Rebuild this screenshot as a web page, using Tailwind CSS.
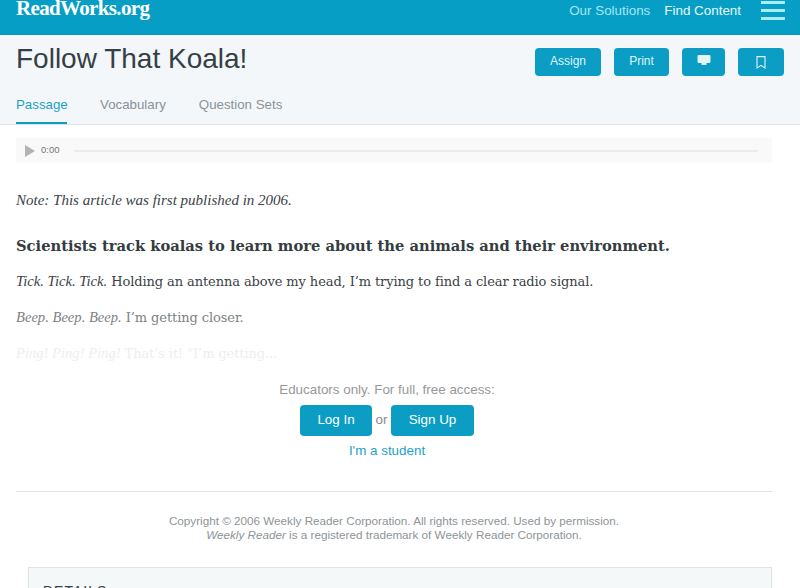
<!DOCTYPE html>
<html>
<head>
<script src="https://cdn.jsdelivr.net/npm/@tailwindcss/browser@4"></script>
</head>
<body class="bg-white overflow-hidden font-['Liberation_Sans',sans-serif]">
<div class="w-[800px] h-[588px] overflow-hidden flex flex-col">
  <header class="h-[35px] shrink-0 bg-[#079ec6] flex items-start justify-between pl-4 pr-4 overflow-hidden border-b border-[#0b95bb]">
    <div class="font-['Liberation_Serif',serif] font-bold text-[21px] leading-[16px] tracking-[-0.65px] text-white">ReadWorks<span class="text-[#d8f1f7]">.</span>org</div>
    <div class="flex items-start">
      <span class="text-[13.4px] leading-[22px] text-[#a5e6f3]">Our Solutions</span>
      <span class="text-[13.4px] leading-[22px] text-[#e6f9fd] ml-[14px]">Find Content</span>
      <div class="ml-[20px] mr-[-1px] mt-[1px] w-[24px] flex flex-col gap-[5px]">
        <span class="block h-[3px] bg-[#a9ecf6]"></span>
        <span class="block h-[3px] bg-[#a9ecf6]"></span>
        <span class="block h-[3px] bg-[#a9ecf6]"></span>
      </div>
    </div>
  </header>
  <section class="h-[90px] shrink-0 bg-[#f4f7f9] border-b border-[#dfe3e5] flex flex-col px-4">
    <div class="flex justify-between items-start h-[59px]">
      <h1 class="text-[28px] leading-[32px] mt-[8px] text-[#353f46]">Follow That Koala!</h1>
      <div class="flex gap-[13px] mt-[13px]">
        <button class="w-[66px] h-[28px] rounded-[4px] bg-[#0b9dc3] text-[#dff5fa] text-[12px] pb-[2px]">Assign</button>
        <button class="w-[55px] h-[28px] rounded-[4px] bg-[#0b9dc3] text-[#dff5fa] text-[12px] pb-[2px]">Print</button>
        <button class="w-[43px] h-[28px] rounded-[4px] bg-[#0b9dc3] flex items-start justify-center pt-[7px]">
          <svg width="14" height="11" viewBox="0 0 14 11"><rect x="0.5" y="0" width="13" height="8" rx="1" fill="#e3f6fa"/><rect x="4.5" y="8" width="5" height="2" fill="#e3f6fa"/></svg>
        </button>
        <button class="w-[46px] h-[28px] rounded-[4px] bg-[#0b9dc3] flex items-center justify-center">
          <svg width="10" height="13" viewBox="0 0 10 13"><path fill="none" stroke="#e3f6fa" stroke-width="1.1" d="M1 .6h8v11.4L5 9.4 1 12z"/></svg>
        </button>
      </div>
    </div>
    <nav class="flex gap-[33px] text-[13.3px] h-[30px] text-[#8a9299]">
      <a class="w-[51px] whitespace-nowrap h-[30px] leading-[22px] border-b-[2px] border-[#0b9dc3] text-[#1ba3c6]">Passage</a>
      <a class="leading-[22px]">Vocabulary</a>
      <a class="leading-[22px]">Question Sets</a>
    </nav>
  </section>
  <main class="flex-1 w-[772px] ml-4 relative">
    <div class="mt-[13px] h-[25px] w-[756px] bg-[#f9f9f9] flex items-center pl-[9px] pr-[14px]">
      <svg width="10" height="12" viewBox="0 0 10 12"><path fill="#b3b3b3" d="M0 0l10 6-10 6z"/></svg>
      <span class="ml-[6px] text-[9.5px] text-[#777]">0:00</span>
      <div class="ml-[14px] flex-1 h-[2px] bg-[#ececec]"></div>
    </div>
    <article class="font-['DejaVu_Serif',serif]">
      <p class="mt-[27px] italic font-['Liberation_Serif',serif] text-[15px] leading-[20px] text-[#3b4248]">Note: This article was first published in 2006.</p>
      <h2 class="mt-[26px] font-bold text-[14.7px] leading-[20px] text-[#343c42]">Scientists track koalas to learn more about the animals and their environment.</h2>
      <p class="mt-[15px] text-[13px] tracking-[-0.1px] leading-[20px] text-[#3b4248]"><em class="font-['Liberation_Serif',serif] text-[14.6px] tracking-normal">Tick. Tick. Tick.</em> Holding an antenna above my head, I’m trying to find a clear radio signal.</p>
      <p class="mt-[15px] text-[13px] tracking-[-0.1px] leading-[20px] text-[#7d8286]"><em class="font-['Liberation_Serif',serif] text-[14.6px] tracking-normal">Beep. Beep. Beep.</em> I’m getting closer.</p>
      <p class="mt-[15px] text-[13px] tracking-[-0.1px] leading-[20px] text-[#eeeeee]"><em class="font-['Liberation_Serif',serif] text-[14.6px] tracking-normal">Ping! Ping! Ping!</em> That’s it! "I’m getting...</p>
    </article>
    <div class="mt-[16px] flex flex-col items-center w-[742px]">
      <p class="text-[13.4px] leading-[20px] text-[#989898]">Educators only. For full, free access:</p>
      <div class="mt-[5px] flex items-center gap-[3.5px]">
        <button class="w-[72px] h-[31px] rounded-[4px] bg-[#0b9dc3] text-white text-[13.4px]">Log In</button>
        <span class="text-[13.4px] text-[#8a8a8a]">or</span>
        <button class="w-[83px] h-[31px] rounded-[4px] bg-[#0b9dc3] text-white text-[13.4px]">Sign Up</button>
      </div>
      <a class="mt-[5px] text-[13.4px] leading-[20px] text-[#1ba3c6]">I'm a student</a>
    </div>
    <div class="mt-[30px] w-[756px] h-[1px] bg-[#e2e2e2]"></div>
    <div class="mt-[22px] w-[756px] text-center text-[11.7px] leading-[14px] text-[#8e9498]">
      <p>Copyright © 2006 Weekly Reader Corporation. All rights reserved. Used by permission.</p>
      <p><em>Weekly Reader</em> is a registered trademark of Weekly Reader Corporation.</p>
    </div>
    <div class="mt-[25px] ml-[12px] h-[60px] w-[744px] bg-[#f4f8f9] border border-[#dfe3e5] px-[14px] pt-[13px] text-[14px] tracking-[1px] text-[#353f46]">DETAILS</div>
  </main>
</div>
</body>
</html>
